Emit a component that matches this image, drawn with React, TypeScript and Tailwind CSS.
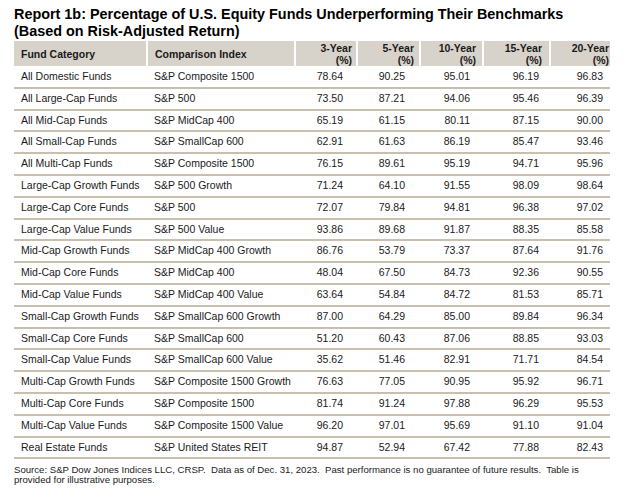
const rows: [string, string, string, string, string, string, string][] = [
  ["All Domestic Funds", "S&P Composite 1500", "78.64", "90.25", "95.01", "96.19", "96.83"],
  ["All Large-Cap Funds", "S&P 500", "73.50", "87.21", "94.06", "95.46", "96.39"],
  ["All Mid-Cap Funds", "S&P MidCap 400", "65.19", "61.15", "80.11", "87.15", "90.00"],
  ["All Small-Cap Funds", "S&P SmallCap 600", "62.91", "61.63", "86.19", "85.47", "93.46"],
  ["All Multi-Cap Funds", "S&P Composite 1500", "76.15", "89.61", "95.19", "94.71", "95.96"],
  ["Large-Cap Growth Funds", "S&P 500 Growth", "71.24", "64.10", "91.55", "98.09", "98.64"],
  ["Large-Cap Core Funds", "S&P 500", "72.07", "79.84", "94.81", "96.38", "97.02"],
  ["Large-Cap Value Funds", "S&P 500 Value", "93.86", "89.68", "91.87", "88.35", "85.58"],
  ["Mid-Cap Growth Funds", "S&P MidCap 400 Growth", "86.76", "53.79", "73.37", "87.64", "91.76"],
  ["Mid-Cap Core Funds", "S&P MidCap 400", "48.04", "67.50", "84.73", "92.36", "90.55"],
  ["Mid-Cap Value Funds", "S&P MidCap 400 Value", "63.64", "54.84", "84.72", "81.53", "85.71"],
  ["Small-Cap Growth Funds", "S&P SmallCap 600 Growth", "87.00", "64.29", "85.00", "89.84", "96.34"],
  ["Small-Cap Core Funds", "S&P SmallCap 600", "51.20", "60.43", "87.06", "88.85", "93.03"],
  ["Small-Cap Value Funds", "S&P SmallCap 600 Value", "35.62", "51.46", "82.91", "71.71", "84.54"],
  ["Multi-Cap Growth Funds", "S&P Composite 1500 Growth", "76.63", "77.05", "90.95", "95.92", "96.71"],
  ["Multi-Cap Core Funds", "S&P Composite 1500", "81.74", "91.24", "97.88", "96.29", "95.53"],
  ["Multi-Cap Value Funds", "S&P Composite 1500 Value", "96.20", "97.01", "95.69", "91.10", "91.04"],
  ["Real Estate Funds", "S&P United States REIT", "94.87", "52.94", "67.42", "77.88", "82.43"],
];

const years = ["3-Year", "5-Year", "10-Year", "15-Year", "20-Year"];
// number padding differs a bit per column in the source
const numPad = ["pr-[14px]", "pr-[15px]", "pr-[13px]", "pr-[11px]", "pr-[7px]"];
const headPad = ["pr-[4px]", "pr-[5px]", "pr-[6px]", "pr-[7px]", "pr-[1px]"];

export default function App() {
  return (
    <div className="w-[629px] h-[499px] bg-white pl-[14px] pt-[6px] font-['Liberation_Sans',Arial,sans-serif] text-[#1a1a1a]">
      <h1 className="text-[14.4px] font-bold leading-[17px] text-black">
        Report 1b: Percentage of U.S. Equity Funds Underperforming Their Benchmarks
        <br />
        (Based on Risk-Adjusted Return)
      </h1>

      <table className="mt-[1px] w-[596px] table-fixed border-collapse text-[10.5px]">
        <colgroup>
          <col className="w-[133px]" />
          <col className="w-[148px]" />
          <col className="w-[62px]" />
          <col className="w-[63px]" />
          <col className="w-[63px]" />
          <col className="w-[67px]" />
          <col className="w-[60px]" />
        </colgroup>
        <thead>
          <tr className="h-[25px] bg-[#d8d3ca]">
            <th className="text-left font-bold pl-[7px] align-middle leading-[12px]">Fund Category</th>
            <th className="text-left font-bold pl-[7px] align-middle leading-[12px] border-l-2 border-white">Comparison Index</th>
            {years.map((y, i) => (
              <th key={y} className={`text-right font-bold align-middle leading-[12px] border-l-2 border-white ${headPad[i]}`}>
                {y}
                <br />
                (%)
              </th>
            ))}
          </tr>
        </thead>
        <tbody>
          {rows.map((r) => (
            <tr key={r[0]} className="h-[21.8px] border-b-2 border-[#c9bfae]">
              <td className="pl-[7px] whitespace-nowrap">{r[0]}</td>
              <td className="pl-[7px] whitespace-nowrap">{r[1]}</td>
              {r.slice(2).map((v, i) => (
                <td key={i} className={`text-right ${numPad[i]}`}>{v}</td>
              ))}
            </tr>
          ))}
        </tbody>
      </table>

      <p className="mt-[6px] w-[596px] text-[9.6px] leading-[10px] whitespace-pre-wrap text-[#222]">
        {"Source: S&P Dow Jones Indices LLC, CRSP.  Data as of Dec. 31, 2023.  Past performance is no guarantee of future results.  Table is provided for illustrative purposes."}
      </p>
    </div>
  );
}
